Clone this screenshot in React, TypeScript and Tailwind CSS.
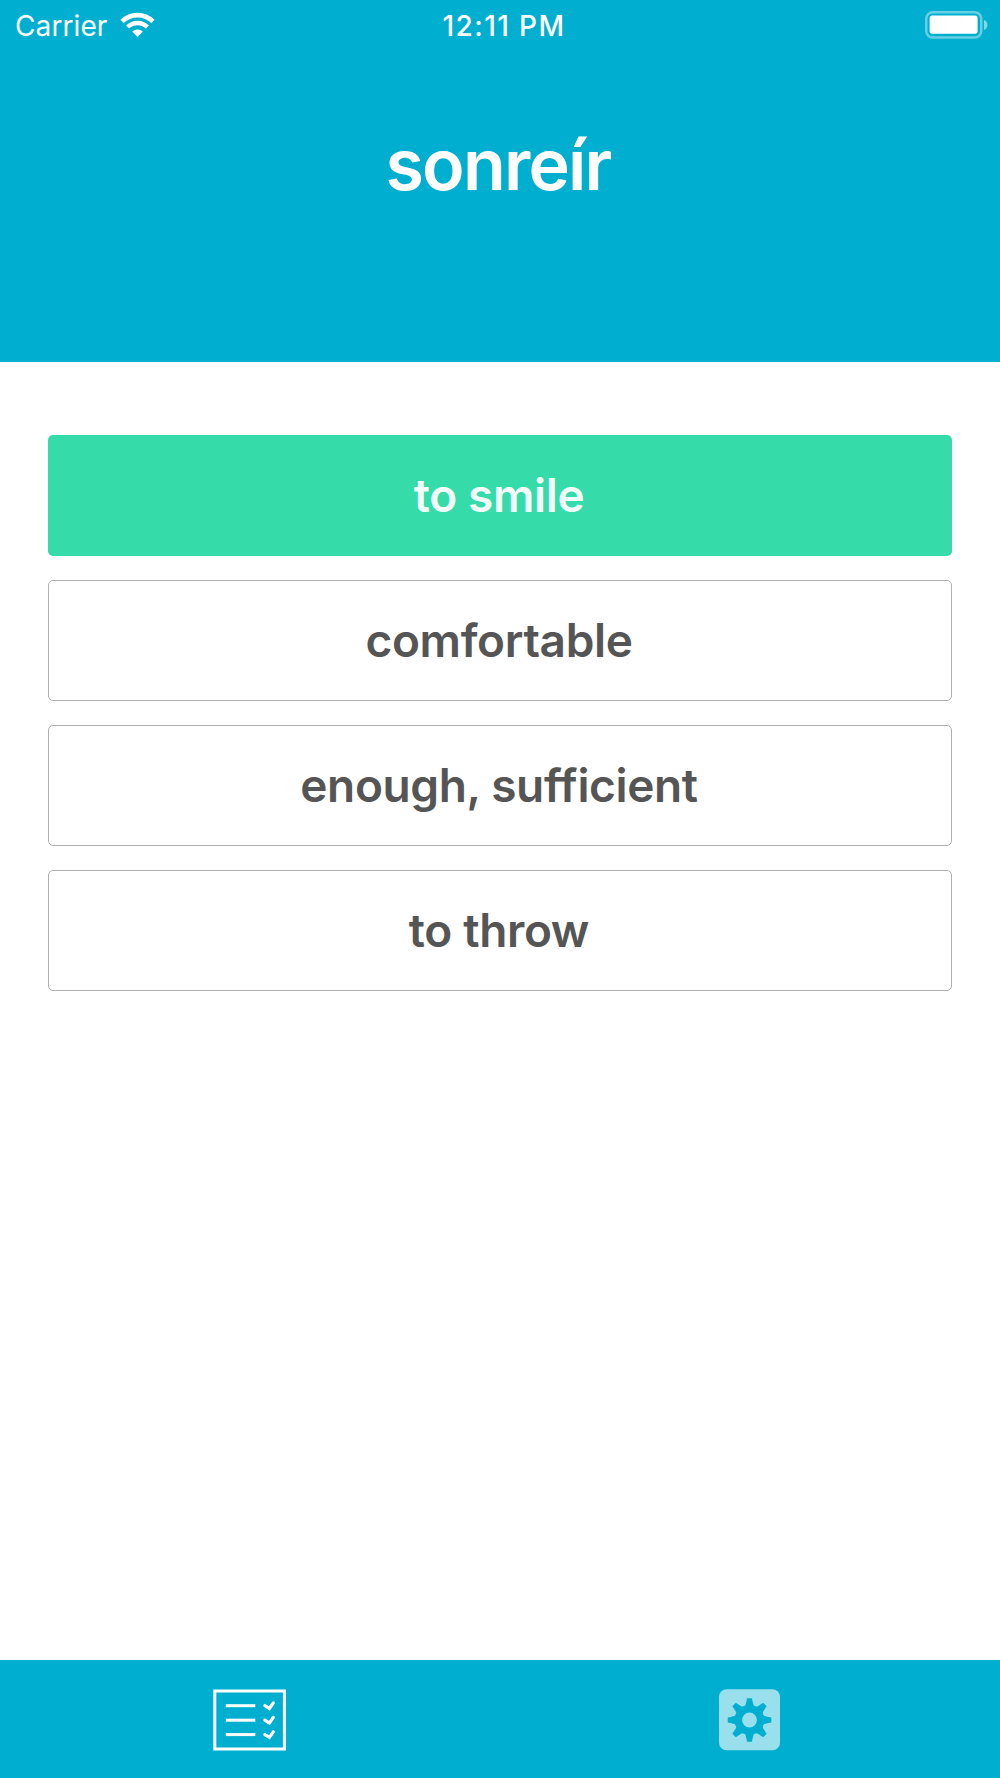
import { useState } from "react";
import clsx from "clsx";

const QUESTION = "sonreír";

const ANSWERS = [
  { id: "smile", label: "to smile", correct: true },
  { id: "comfortable", label: "comfortable", correct: false },
  { id: "enough", label: "enough, sufficient", correct: false },
  { id: "throw", label: "to throw", correct: false },
];

function WifiIcon() {
  return (
    <svg width="35" height="26" viewBox="-17.5 -25 35 26" fill="none" stroke="#fff">
      <path d="M-15.4 -15.6 A21.9 21.9 0 0 1 15.4 -15.6" strokeWidth="4.7" />
      <path d="M-9.9 -10 A14.1 14.1 0 0 1 9.9 -10" strokeWidth="4.4" />
      <path d="M0 0 L-5.3 -5.4 A7.6 7.6 0 0 1 5.3 -5.4 Z" fill="#fff" stroke="none" />
    </svg>
  );
}

function BatteryIcon() {
  return (
    <svg width="64" height="28" viewBox="0 0 64 28">
      <rect x="1.25" y="1.25" width="55" height="25.3" rx="6.5" fill="none" stroke="#fff" strokeOpacity="0.4" strokeWidth="2.5" />
      <rect x="4.6" y="4.5" width="48" height="18.2" rx="2.6" fill="#fff" />
      <path d="M59 9 C63.6 10.8 63.6 17.2 59 19 Z" fill="#fff" fillOpacity="0.5" />
    </svg>
  );
}

function QuizIcon() {
  return (
    <svg width="74" height="62" viewBox="0 0 74 62" fill="none" stroke="#fff" strokeWidth="3">
      <rect x="1.8" y="2" width="69.6" height="58" />
      {[16.7, 31.2, 45.6].map((y) => (
        <g key={y} transform={`translate(0 ${y})`}>
          <path d="M12.8 0 H42.3" />
          <path d="M51.9 0 L56.4 2.8 L60.3 -2.8" strokeWidth="3.2" strokeLinecap="round" />
        </g>
      ))}
    </svg>
  );
}

function SettingsIcon() {
  return (
    <svg width="62" height="62" viewBox="-30.5 -31 62 62">
      <rect x="-30.5" y="-30.7" width="61" height="61" rx="7.5" fill="#9adfec" />
      <g fill="#00afd0">
        <circle r="15" />
        {[0, 45, 90, 135, 180, 225, 270, 315].map((angle) => (
          <path key={angle} transform={`rotate(${angle})`} d="M-5 -13 Q-3.6 -15 -2.5 -21.8 H2.5 Q3.6 -15 5 -13 Z" />
        ))}
      </g>
      <circle r="7.4" fill="#9adfec" />
    </svg>
  );
}

export default function App() {
  const [tab, setTab] = useState("quiz");

  return (
    <div className="flex h-[1778px] w-[1000px] flex-col bg-white font-['Inter',sans-serif]">
      {/* Header */}
      <header className="flex h-[362px] flex-col bg-[#00afd0] text-white">
        <div className="grid h-[49px] grid-cols-[1fr_auto_1fr] items-center pr-[11px] pl-[15px]">
          <div className="flex items-center gap-[13px]">
            <span className="pt-0.5 text-[28px] font-normal tracking-[0.1px]">Carrier</span>
            <WifiIcon />
          </div>
          <span className="pt-0.5 pl-1 text-[28px] font-medium tracking-[1.4px]">12:11 PM</span>
          <div className="flex justify-end">
            <BatteryIcon />
          </div>
        </div>
        <h1 className="mt-[66px] pr-1 text-center text-[70px] leading-[100px] font-semibold tracking-[-1.8px]">{QUESTION}</h1>
      </header>

      {/* Answers */}
      <main className="flex flex-1 flex-col gap-6 px-12 pt-[73px]">
        {ANSWERS.map((answer) => (
          <button
            key={answer.id}
            type="button"
            className={clsx(
              "h-[121px] rounded-[5px] pr-0.5 text-[46px] font-semibold tracking-[-0.35px]",
              answer.correct
                ? "bg-[#35dca9] text-white/95"
                : "border-[1.5px] border-[#b0b0b0] text-[#555]"
            )}
          >
            {answer.label}
          </button>
        ))}
      </main>

      {/* Tabs */}
      <nav className="grid h-[118px] grid-cols-2 bg-[#00afd0] pt-0.5">
        <button type="button" aria-pressed={tab === "quiz"} onClick={() => setTab("quiz")} className="flex items-center justify-center">
          <QuizIcon />
        </button>
        <button type="button" aria-pressed={tab === "settings"} onClick={() => setTab("settings")} className="flex items-center justify-center">
          <SettingsIcon />
        </button>
      </nav>
    </div>
  );
}
